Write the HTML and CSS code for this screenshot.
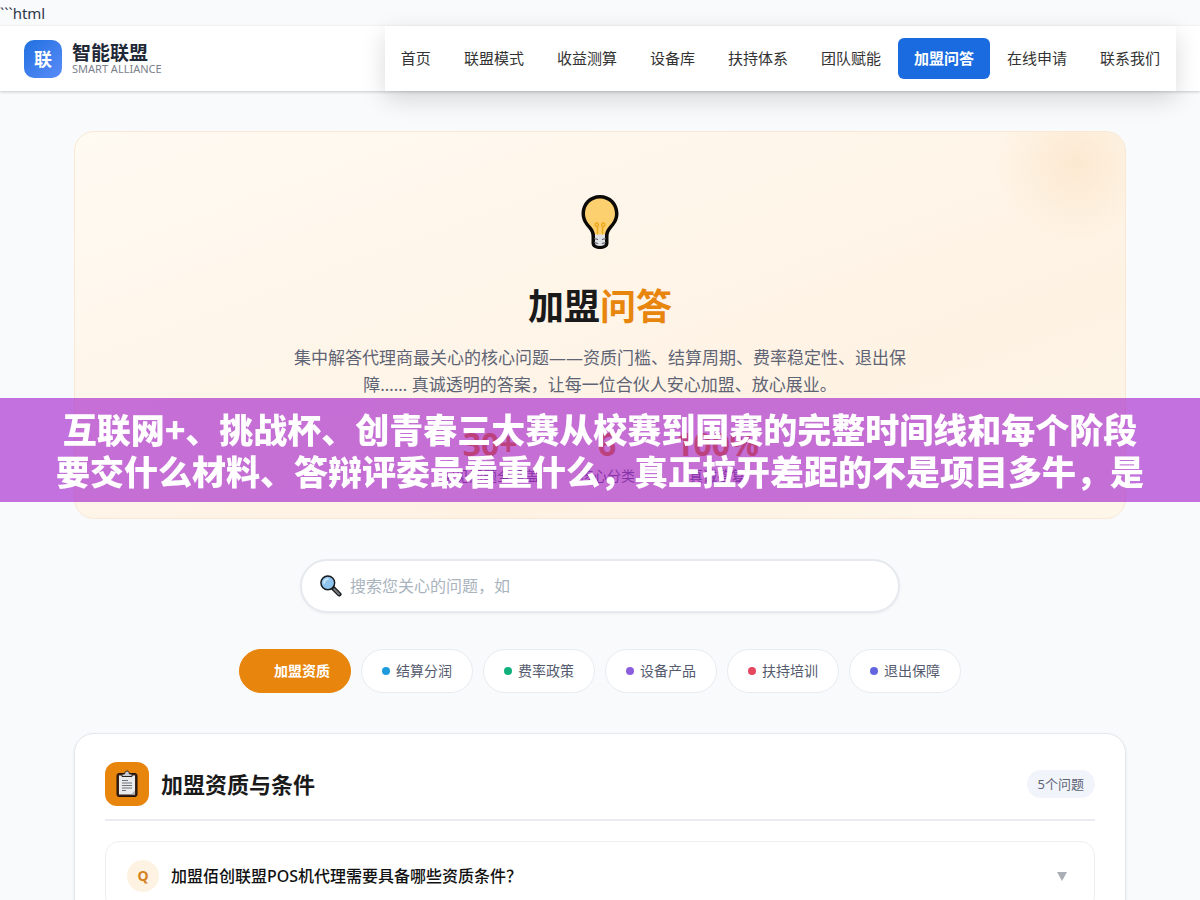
FILE: index.html
```html
<!DOCTYPE html>
<html lang="zh-CN">
<head>
  <meta charset="UTF-8">
  <meta name="viewport" content="width=device-width, initial-scale=1.0">
  <title>加盟问答</title>
  <link rel="stylesheet" href="styles.css">
</head>
<body>
  ```html
  <header class="header">
    <a class="logo" href="#">
      <span class="logo-icon">联</span>
      <span class="logo-text">
        <strong>智能联盟</strong>
        <small>SMART ALLIANCE</small>
      </span>
    </a>
    <nav class="nav">
      <a href="#">首页</a>
      <a href="#">联盟模式</a>
      <a href="#">收益测算</a>
      <a href="#">设备库</a>
      <a href="#">扶持体系</a>
      <a href="#">团队赋能</a>
      <a href="#" class="active">加盟问答</a>
      <a href="#">在线申请</a>
      <a href="#">联系我们</a>
    </nav>
  </header>

  <main class="container">
    <section class="hero">
      <svg class="hero-icon" viewBox="0 0 56 56" aria-hidden="true">
        <path d="M28 1C17.500 1 9.500 9 9.500 19.500c0 7 3.500 11 6.800 15 2.400 3 3.200 5 3.200 8.500V49c0 3.500 3 6 8.500 6s8.500-2.500 8.500-6v-6c0-3.500.8-5.500 3.200-8.500 3.300-4 6.800-8 6.800-15C46.500 9 38.500 1 28 1z" fill="#0b0a08"/>
        <path d="M28 4.500c-8.500 0-15 6.500-15 15 0 6 3 9.500 6.300 13.200 2.300 2.700 3.400 5 3.700 8.300h10c.3-3.300 1.400-5.600 3.700-8.300C40 29 43 25.500 43 19.500c0-8.500-6.500-15-15-15z" fill="#fdd06f"/>
        <path d="M25.500 41V32.500c-3 .5-3-3.500-.8-3.500 1.800 0 1.800 2 1.800 3.500M30.500 41V32.500c3 .5 3-3.500.8-3.500-1.800 0-1.800 2-1.800 3.500" fill="none" stroke="#efa81c" stroke-width="1.500"/>
        <path d="M23 40.500h10v9c0 1.500-2 2.500-5 2.500s-5-1-5-2.500z" fill="#dfe0e3"/>
        <path d="M22 44.500l4 1M34 44.500l-4 1M22 48.500l4 1M34 48.500l-4 1" stroke="#55565c" stroke-width="1.200"/>
      </svg>
      <h1>加盟<span>问答</span></h1>
      <p class="hero-desc">集中解答代理商最关心的核心问题——资质门槛、结算周期、费率稳定性、退出保障…… 真诚透明的答案，让每一位合伙人安心加盟、放心展业。</p>
      <div class="stats">
        <div class="stat"><b>30+</b><span>常见问题全覆盖</span></div>
        <div class="stat"><b>6</b><span>核心分类</span></div>
        <div class="stat"><b>100%</b><span>真诚答复</span></div>
      </div>
    </section>

    <label class="search">
      <svg viewBox="0 0 24 24" role="img" aria-label="搜索">
        <path d="M13.500 13.500l7.500 7.500" stroke="#17191c" stroke-width="5" stroke-linecap="round"/>
        <path d="M15.500 15.500l5.200 5.200" stroke="#73777c" stroke-width="2.400" stroke-linecap="round"/>
        <circle cx="8.500" cy="8.500" r="7.500" fill="#8fc4ee" stroke="#17191c" stroke-width="1.600"/>
        <path d="M4.500 8.500a4 4 0 0 1 4-4" fill="none" stroke="#cfe8fb" stroke-width="2" stroke-linecap="round"/>
      </svg>
      <input type="text" placeholder="搜索您关心的问题，如">
    </label>

    <div class="tabs">
      <button class="tab active"><i class="dot orange"></i>加盟资质</button>
      <button class="tab"><i class="dot blue"></i>结算分润</button>
      <button class="tab"><i class="dot green"></i>费率政策</button>
      <button class="tab"><i class="dot purple"></i>设备产品</button>
      <button class="tab"><i class="dot red"></i>扶持培训</button>
      <button class="tab"><i class="dot indigo"></i>退出保障</button>
    </div>

    <section class="faq">
      <div class="faq-head">
        <span class="faq-icon">
          <svg viewBox="0 0 24 28" aria-hidden="true">
            <rect x="2" y="3.500" width="20" height="23" rx="2" fill="#3a2318" stroke="#1d120d"/>
            <path d="M4 5.500h16v19h-16z" fill="#e9ebed"/>
            <path d="M16 24.500l4-4v4z" fill="#aeb4b9"/>
            <path d="M7 6.500V4h2.500C9.800 2 10.700 1 12 1s2.200 1 2.500 3H17v2.500z" fill="#c9cdd1" stroke="#2b211d"/>
            <path d="M7 10.500h6M7 13h10M7 15.500h10M7 18h10M7 20.500h4" stroke="#6d737a" stroke-width="1"/>
          </svg>
        </span>
        <h2>加盟资质与条件</h2>
        <span class="count">5个问题</span>
      </div>
      <div class="faq-item">
        <button class="question">
          <span class="q">Q</span>
          <span class="question-text">加盟佰创联盟POS机代理需要具备哪些资质条件？</span>
          <span class="arrow"></span>
        </button>
      </div>
    </section>
  </main>

  <div class="banner">互联网+、挑战杯、创青春三大赛从校赛到国赛的完整时间线和每个阶段<br>要交什么材料、答辩评委最看重什么，真正拉开差距的不是项目多牛，是</div>
</body>
</html>
```
FILE: styles.css
```css
* {
  margin: 0;
  padding: 0;
  box-sizing: border-box;
}

body {
  font-family: "Noto Sans", "Noto Sans CJK SC", sans-serif;
  font-size: 15px;
  line-height: 26px;
  color: #2d3748;
  background: #f8fafc;
}

a {
  color: inherit;
  text-decoration: none;
}

button,
input {
  font: inherit;
}

.header {
  display: flex;
  justify-content: space-between;
  align-items: center;
  height: 65px;
  padding: 0 24px;
  background: #fff;
  box-shadow: 0 1px 3px rgba(0, 0, 0, 0.2);
}

.logo {
  display: flex;
  align-items: center;
  gap: 10px;
}

.logo-icon {
  width: 38px;
  height: 38px;
  border-radius: 10px;
  background: linear-gradient(135deg, #2070e0, #5a8cf8);
  color: #fff;
  font-size: 18px;
  font-weight: bold;
  line-height: 38px;
  text-align: center;
}

.logo-text {
  display: flex;
  flex-direction: column;
}

.logo-text strong {
  font-size: 19px;
  line-height: 20px;
  color: #1f2937;
}

.logo-text small {
  font-size: 11px;
  line-height: 12px;
  color: #7b818c;
}

.nav {
  display: flex;
  align-items: center;
  gap: 1px;
  height: 65px;
  background: #fff;
  box-shadow: 0 8px 24px rgba(0, 0, 0, 0.15);
}

.nav a {
  padding: 8px 16px;
  border-radius: 6px;
  line-height: 25px;
  color: #333;
}

.nav a.active {
  background: #1a6be0;
  color: #fff;
  font-weight: bold;
}

.container {
  max-width: 1100px;
  margin: 0 auto;
  padding: 40px 24px;
}

.hero {
  display: flex;
  flex-direction: column;
  align-items: center;
  padding: 62px 40px 32px;
  border: 1px solid #fae8d4;
  border-radius: 20px;
  background:
    radial-gradient(circle at calc(100% - 50px) 30px, rgba(232, 133, 12, 0.1), rgba(232, 133, 12, 0) 80px),
    linear-gradient(160deg, #fffaf2, #fef2e3 70%, #fdf7ea);
}

.hero-icon {
  width: 56px;
  height: 56px;
}

.hero h1 {
  margin-top: 32px;
  font-size: 36px;
  line-height: 50px;
  color: #1a1a1a;
}

.hero h1 span {
  color: #e8850c;
}

.hero-desc {
  max-width: 620px;
  margin-top: 12px;
  font-size: 17px;
  line-height: 27px;
  text-align: center;
  color: #5f6475;
}

.stats {
  display: flex;
  gap: 40px;
  margin-top: 24px;
}

.stat {
  display: flex;
  flex-direction: column;
  align-items: center;
}

.stat b {
  font-size: 32px;
  line-height: 44px;
  color: #e8850c;
}

.stat span {
  font-size: 14px;
  line-height: 20px;
  color: #5f6475;
}

.search {
  display: flex;
  align-items: center;
  gap: 8px;
  max-width: 600px;
  height: 54px;
  margin: 40px auto 36px;
  padding: 0 18px;
  border: 2px solid #e6e9ee;
  border-radius: 27px;
  background: #fff;
  box-shadow: 0 1px 3px rgba(0, 0, 0, 0.05);
}

.search svg {
  width: 22px;
  height: 24px;
}

.search input {
  flex: 1;
  border: 0;
  outline: 0;
  background: none;
  font-size: 16px;
}

.search input::placeholder {
  color: #a9b4be;
}

.tabs {
  display: flex;
  flex-wrap: wrap;
  justify-content: center;
  gap: 10px;
}

.tab {
  display: flex;
  align-items: center;
  gap: 6px;
  height: 44px;
  padding: 0 20px;
  border: 1px solid #e8ebf1;
  border-radius: 22px;
  background: #fff;
  color: #555b6e;
  font-size: 14px;
}

.tab.active {
  border-color: #e8850c;
  background: #e8850c;
  color: #fff;
  font-weight: bold;
}

.dot {
  width: 8px;
  height: 8px;
  border-radius: 50%;
}

.orange { background: #e8850c; }
.blue { background: #1e9bdc; }
.green { background: #12b07c; }
.purple { background: #8b5ede; }
.red { background: #e5475f; }
.indigo { background: #6366e0; }

.faq {
  margin-top: 40px;
  padding: 28px 30px;
  border: 1px solid #e4e8ee;
  border-radius: 20px;
  background: #fff;
  box-shadow: 0 1px 3px rgba(0, 0, 0, 0.08);
}

.faq-head {
  display: flex;
  align-items: center;
  gap: 12px;
  padding-bottom: 13px;
  border-bottom: 2px solid #e9ebee;
}

.faq-icon {
  display: flex;
  align-items: center;
  justify-content: center;
  width: 44px;
  height: 44px;
  border-radius: 12px;
  background: #e8850c;
}

.faq-icon svg {
  width: 24px;
  height: 28px;
}

.faq-head h2 {
  flex: 1;
  font-size: 22px;
  line-height: 30px;
  color: #1a1a1a;
}

.count {
  padding: 0 11px;
  border-radius: 14px;
  background: #f1f4fa;
  color: #5f6475;
  font-size: 13px;
  line-height: 28px;
}

.faq-item {
  margin-top: 20px;
  border: 1px solid #eceff2;
  border-radius: 14px;
}

.question {
  display: flex;
  align-items: center;
  gap: 12px;
  width: 100%;
  padding: 18px 27px 18px 21px;
  border: 0;
  background: none;
  color: #111;
  font-size: 16px;
  font-weight: 500;
  text-align: left;
}

.q {
  width: 32px;
  height: 32px;
  border-radius: 50%;
  background: #fef2e2;
  color: #d4821c;
  font-size: 14px;
  font-weight: bold;
  line-height: 32px;
  text-align: center;
}

.question-text {
  flex: 1;
}

.arrow {
  border: 5px solid transparent;
  border-top: 9px solid #a9afb5;
  border-bottom: 0;
}

/* title strip over the middle of the page */
.banner {
  position: fixed;
  top: 50%;
  left: 0;
  right: 0;
  transform: translateY(-50%);
  padding: 10px 0;
  background: rgba(158, 22, 202, 0.6);
  color: #fff;
  font-family: "Noto Sans CJK SC", "Noto Sans", sans-serif;
  font-size: 34px;
  font-weight: 900;
  line-height: 42px;
  text-align: center;
  white-space: nowrap;
}
```
